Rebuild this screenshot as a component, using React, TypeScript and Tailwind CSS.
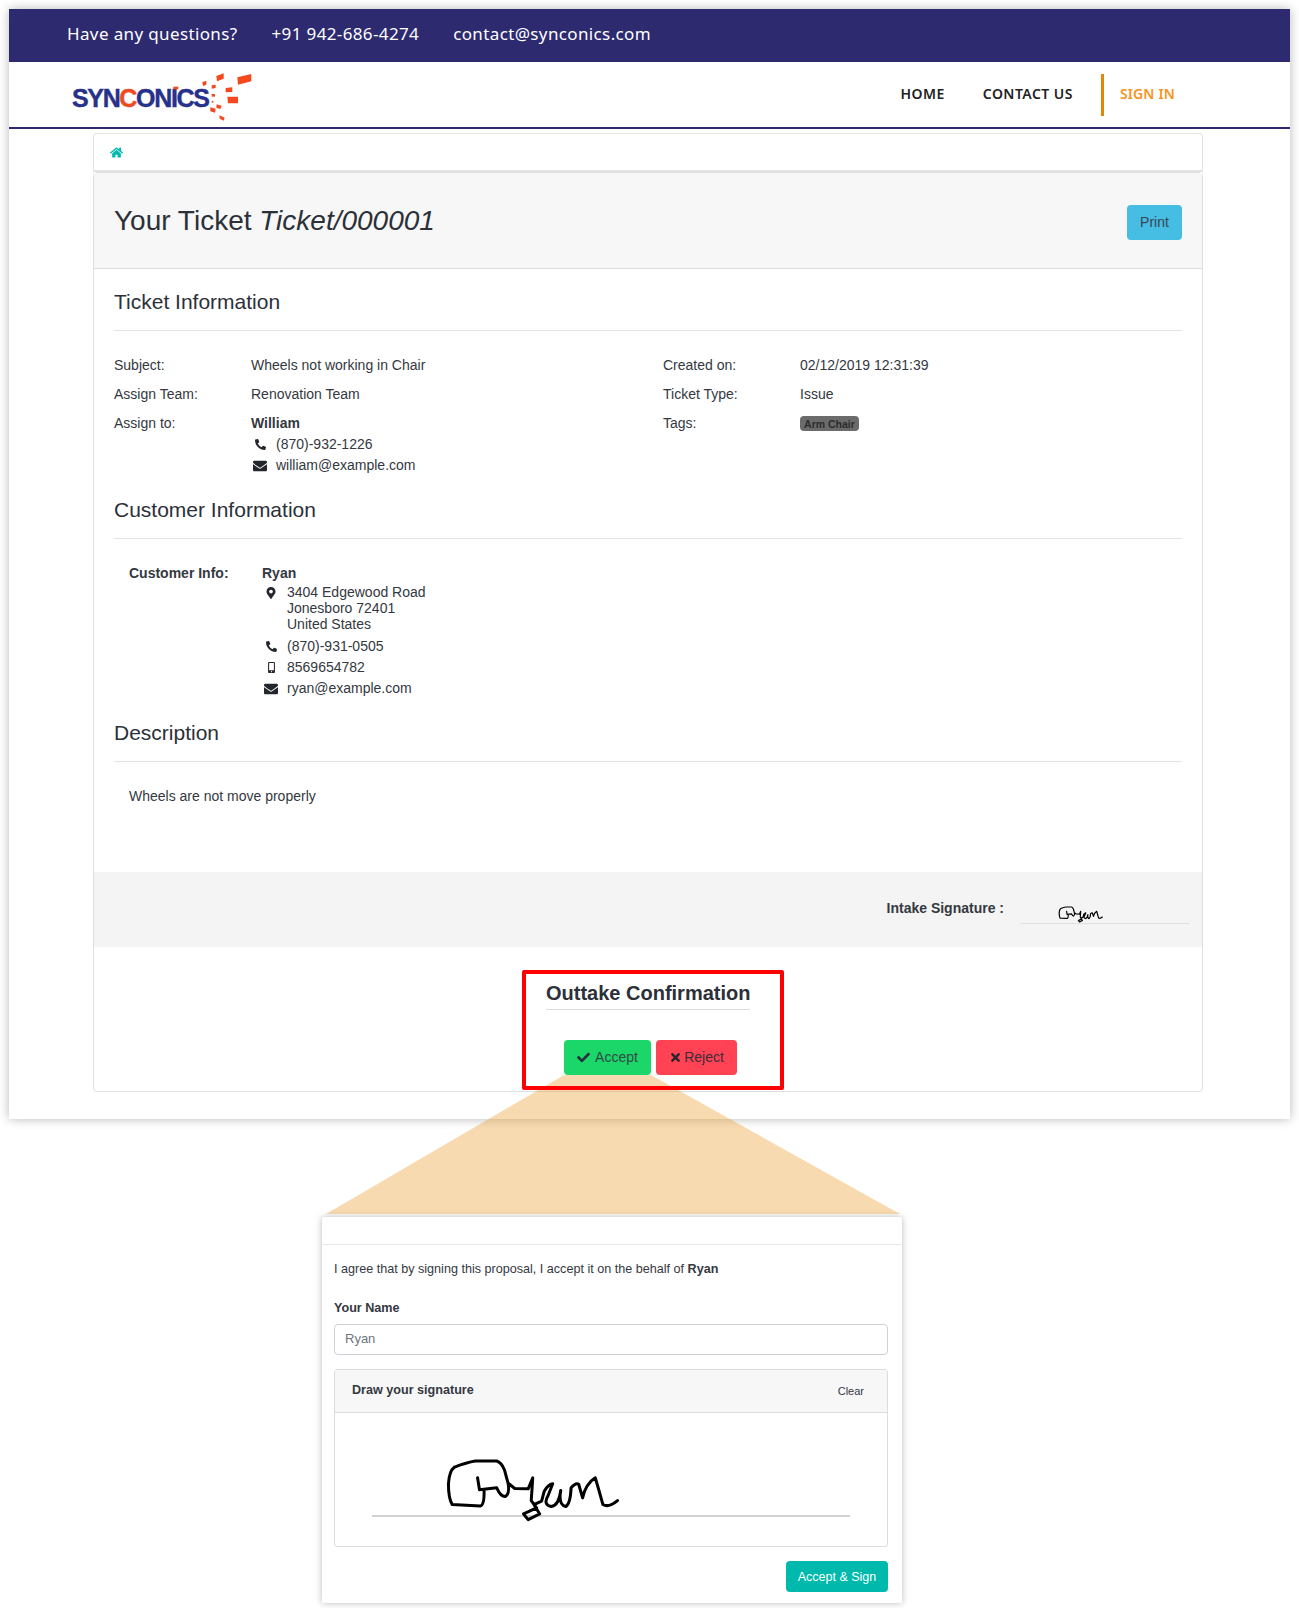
import { FaCheck, FaEnvelope, FaHome, FaMapMarkerAlt, FaMobileAlt, FaPhoneAlt, FaTimes } from "react-icons/fa";

const sans = "font-['Liberation_Sans',Arial,sans-serif]";

const logoBits = [
  "535,52 577,42 577,64 537,74",
  "472,48 494,40 494,56 474,64",
  "430,66 442,62 442,74 432,78",
  "458,76 470,74 470,84 458,86",
  "500,84 520,82 520,96 500,97",
  "505,110 537,110 537,130 507,130",
  "458,102 468,102 468,110 458,110",
  "473,133 488,137 484,147 472,143",
  "454,142 470,146 468,158 454,154",
  "481,166 497,173 494,182 482,176",
  "458,123 463,123 463,128 458,128",
  "343,80 358,80 358,88 343,88",
];

const Logo = () => (
  <div className="relative w-[190px] h-[65px]">
    <span className="absolute left-[3px] top-[17px] text-[25px] leading-[38px] font-bold tracking-[-1.35px] [-webkit-text-stroke:0.4px] text-[#27318b] font-['Liberation_Sans',Arial,sans-serif]">
      SYN<span className="text-[#f04a23]">C</span>ONICS
    </span>
    <svg className="absolute left-0 top-[-2px]" width="210" height="70" viewBox="0 0 630 210">
      {logoBits.map((p) => (
        <polygon key={p} points={p} transform="translate(-30 0)" fill="#f4491f" />
      ))}
    </svg>
  </div>
);

const Signature = ({ className, width }: { className?: string; width: number }) => (
  <svg className={className} viewBox="340 170 480 200" preserveAspectRatio="none">
    <path
      d="M438 232 L443 268 L488 262 Q498 288 510 288 Q522 282 518 250 L508 208 Q500 186 488 182 L432 182 Q410 186 378 200 Q364 212 362 250 Q362 295 372 312 L445 316 Q456 315 455 268 M518 248 L535 264 L570 265 L582 232 L578 300 L592 322 L558 340 L570 357 L600 340 L585 312 L605 302 L612 272 Q622 252 634 250 L622 285 Q608 312 630 318 Q650 315 655 270 Q648 312 668 318 Q680 310 682 262 Q695 245 702 252 L712 292 Q720 250 745 232 Q755 270 765 312 Q780 322 803 300"
      fill="none"
      stroke="#000"
      strokeWidth={width}
      strokeLinejoin="round"
      strokeLinecap="round"
      vectorEffect="non-scaling-stroke"
    />
  </svg>
);

const InfoRow = ({ label, children }: { label: string; children: React.ReactNode }) => (
  <div className="flex w-[549px] mb-2">
    <div className="w-[137px] shrink-0">{label}</div>
    <div>{children}</div>
  </div>
);

const SectionTitle = ({ children }: { children: React.ReactNode }) => (
  <h4 className="text-[21px] leading-[25px] pb-[16px] border-b border-[#e4e4e4] text-[#2c3038]">{children}</h4>
);

const IconLine = ({ icon, iconW, children }: { icon: React.ReactNode; iconW: string; children: React.ReactNode }) => (
  <div className="flex">
    <div className={"flex justify-center pt-[5px] " + iconW}>{icon}</div>
    <div>{children}</div>
  </div>
);

export default function App() {
  return (
    <div className={"relative w-[1299px] h-[1608px] bg-white overflow-hidden text-[14px] leading-[21px] text-[#343841] " + sans}>
      {/* app window */}
      <div className="ml-[9px] pt-[9px] w-[1281px]">
        <div className="shadow-[0_0_10px_rgba(0,0,0,0.28)] h-[1110px] bg-white">
          <div className="h-[53px] bg-[#2d2a70] pl-[58px] pb-[4px] flex items-center gap-[34px] text-white text-[17px] tracking-[0.37px] font-['Noto_Sans',sans-serif]">
            <span>Have any questions?</span>
            <span>+91 942-686-4274</span>
            <span>contact@synconics.com</span>
          </div>

          <div className="h-[67px] border-b-2 border-[#2d2a70] flex items-center pl-[60px] pr-[115px] justify-between">
            <Logo />
            <div className="flex items-center font-['Noto_Sans',sans-serif] font-semibold text-[14px] tracking-[0.45px] text-[#222]">
              <span className="-mt-[2px]">HOME</span>
              <span className="ml-[38px] -mt-[2px]">CONTACT US</span>
              <span className="ml-[28px] border-l-[3px] border-[#e5850b] h-[42px] pl-[16px] pb-[2px] flex items-center tracking-[0.15px] text-[#f7941d]">SIGN IN</span>
            </div>
          </div>

          <div className="ml-[84px] w-[1110px] mt-1">
            <div className="h-[39px] border border-[#e3e3e6] rounded-t-[4px] border-b-2 flex items-center pl-[16px]">
              <FaHome className="text-[#00b9ad] text-[13px]" />
            </div>

            <div className="border border-[#dfdfe2] rounded-[4px] h-[920px]">
              <div className="h-[96px] bg-[#f7f7f7] border-b border-[#dcdcdc] flex items-center justify-between pl-[20px] pr-[20px] pt-[3px]">
                <h1 className="text-[28px] leading-[34px] -mt-[3px] text-[#2c3038]">
                  Your Ticket <em>Ticket/000001</em>
                </h1>
                <button className="w-[55px] h-[35px] bg-[#46bde2] rounded-[4px] text-[#3a4453]">Print</button>
              </div>

              <div className="px-[20px] pt-[20px]">
                <SectionTitle>Ticket Information</SectionTitle>
                <div className="flex mt-[24px]">
                  <div>
                    <InfoRow label="Subject:">Wheels not working in Chair</InfoRow>
                    <InfoRow label="Assign Team:">Renovation Team</InfoRow>
                    <InfoRow label="Assign to:">
                      <b>William</b>
                      <IconLine iconW="w-[25px] pr-[7px]" icon={<FaPhoneAlt className="text-[11px] text-[#23262d]" />}>
                        (870)-932-1226
                      </IconLine>
                      <IconLine iconW="w-[25px] pr-[7px]" icon={<FaEnvelope className="text-[14px] -mt-[1px] text-[#23262d]" />}>
                        william@example.com
                      </IconLine>
                    </InfoRow>
                  </div>
                  <div>
                    <InfoRow label="Created on:">02/12/2019 12:31:39</InfoRow>
                    <InfoRow label="Ticket Type:">Issue</InfoRow>
                    <InfoRow label="Tags:">
                      <span className="block w-[59px] h-[15px] mt-[3px] bg-[#6b6b6b] rounded-[4px] text-[10.5px] leading-[16px] font-bold text-center text-[#2b2b2b]">Arm Chair</span>
                    </InfoRow>
                  </div>
                </div>

                <div className="mt-[13px]">
                  <SectionTitle>Customer Information</SectionTitle>
                </div>
                <div className="flex mt-[24px] pl-[15px]">
                  <b className="w-[133px] shrink-0">Customer Info:</b>
                  <div>
                    <b>Ryan</b>
                    <div className="flex">
                      <div className="flex justify-center w-[25px] pr-[7px] pt-[3px]">
                        <FaMapMarkerAlt className="text-[12px] text-[#23262d]" />
                      </div>
                      <div className="leading-[16px] mb-[4px]">
                        3404 Edgewood Road
                        <br />
                        Jonesboro 72401
                        <br />
                        United States
                      </div>
                    </div>
                    <IconLine iconW="w-[25px] pr-[7px]" icon={<FaPhoneAlt className="text-[11px] text-[#23262d]" />}>
                      (870)-931-0505
                    </IconLine>
                    <IconLine iconW="w-[25px] pr-[7px]" icon={<FaMobileAlt className="text-[11px] text-[#23262d]" />}>
                      8569654782
                    </IconLine>
                    <IconLine iconW="w-[25px] pr-[7px]" icon={<FaEnvelope className="text-[14px] -mt-[1px] text-[#23262d]" />}>
                      ryan@example.com
                    </IconLine>
                  </div>
                </div>

                <div className="mt-[21px]">
                  <SectionTitle>Description</SectionTitle>
                </div>
                <div className="mt-[24px] pl-[15px]">Wheels are not move properly</div>
              </div>

              <div className="mt-[65px] h-[75px] bg-[#f4f4f4] flex justify-end pr-[13px] pt-[26px]">
                <b>Intake Signature :</b>
                <div className="relative ml-[16px] w-[169px] h-[26px] border-b border-[#dfdfdf]">
                  <Signature className="absolute left-[37px] top-[8px] w-[47px] h-[17px]" width={1.2} />
                </div>
              </div>

              <div className="flex flex-col items-center pt-[34px] -ml-[2px]">
                <h3 className="text-[20px] leading-[24px] font-bold pb-[4px] border-b border-[#dcdcdc] w-[204px] whitespace-nowrap text-[#2c3038] ml-[2px]">
                  Outtake Confirmation
                </h3>
                <div className="flex gap-[5px] mt-[30px] ml-[7px]">
                  <button className="w-[87px] h-[35px] rounded-[4px] bg-[#1bd76a] flex items-center justify-center gap-[5px] text-[#2f4a44]">
                    <FaCheck className="text-[13px] text-[#26323a]" /> Accept
                  </button>
                  <button className="w-[81px] h-[35px] rounded-[4px] bg-[#ff4354] flex items-center justify-center gap-[2px] text-[#3c2c38]">
                    <FaTimes className="text-[13px] text-[#26262e]" /> Reject
                  </button>
                </div>
              </div>
            </div>
          </div>
        </div>
      </div>

      {/* accept & sign dialog */}
      <div className="ml-[322px] mt-[98px] w-[580px] h-[386px] bg-white rounded-t-[3px] shadow-[0_0_7px_rgba(0,0,0,0.28)] text-[12.6px] leading-[16px]">
        <div className="h-[28px] border-b border-[#e9e9e9]" />
        <div className="pl-[12px] pr-[14px]">
          <p className="mt-[16px]">
            I agree that by signing this proposal, I accept it on the behalf of <b>Ryan</b>
          </p>
          <label className="block font-bold mt-[23px]">Your Name</label>
          <div className="mt-[8px] h-[31px] border border-[#cfd0d8] rounded-[4px] pl-[10px] pb-[2px] flex items-center text-[13px] text-[#6c757d]">Ryan</div>
          <div className="mt-[14px] border border-[#dcdcde] rounded-[3px] h-[178px]">
            <div className="h-[43px] bg-[#f7f7f7] border-b border-[#dcdcdc] flex items-center justify-between pl-[17px] pr-[23px]">
              <b className="-mt-[3px]">Draw your signature</b>
              <span className="text-[11px]">Clear</span>
            </div>
            <div className="relative h-[134px] pt-[102px] px-[37px]">
              <div className="border-b-2 border-[#d2d2d2]" />
              <Signature className="absolute left-[105px] top-[44px] w-[184px] h-[67px]" width={3} />
            </div>
          </div>
          <div className="flex justify-end mt-[14px]">
            <button className="w-[102px] h-[31px] rounded-[4px] bg-[#00b9ad] text-[12.5px] text-white">Accept &amp; Sign</button>
          </div>
        </div>
      </div>

      {/* callout over the page */}
      <svg className="absolute left-0 top-0 pointer-events-none" width="1299" height="1608">
        <polygon points="564,1075 651,1075 900,1214 326,1214" fill="rgba(236,150,30,0.35)" />
      </svg>
      <div className="absolute left-[522px] top-[970px] w-[262px] h-[120px] border-[4px] border-[#ff0000] rounded-[2px] pointer-events-none" />
    </div>
  );
}
